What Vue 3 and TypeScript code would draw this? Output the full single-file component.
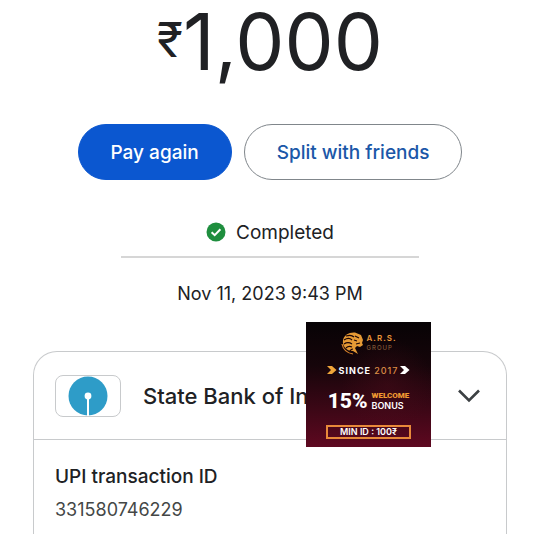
<script setup lang="ts">
import { ref } from 'vue'

interface Payment {
  currency: string
  amount: string
  status: string
  date: string
  bank: string
  transactionId: string
}

const payment: Payment = {
  currency: '₹',
  amount: '1,000',
  status: 'Completed',
  date: 'Nov 11, 2023 9:43 PM',
  bank: 'State Bank of India',
  transactionId: '331580746229',
}

const expanded = ref<boolean>(true)
</script>

<template>
  <main class="page">
    <h1 class="amount">
      <span class="currency">{{ payment.currency }}</span><span>{{ payment.amount }}</span>
    </h1>

    <div class="actions">
      <button type="button" class="btn primary">Pay again</button>
      <button type="button" class="btn outline">Split with friends</button>
    </div>

    <div class="status">
      <svg class="tick" viewBox="0 0 20 20" aria-hidden="true">
        <circle cx="10" cy="10" r="9.5" fill="#1e8e3e" />
        <path d="M5.6 10.2 8.7 13.2 14.4 7.2" fill="none" stroke="#fff" stroke-width="2" />
      </svg>
      <span>{{ payment.status }}</span>
    </div>
    <time class="date">{{ payment.date }}</time>

    <section class="card">
      <header class="head">
        <span class="logo">
          <svg viewBox="0 0 40 40" aria-hidden="true">
            <circle cx="20" cy="20" r="19.5" fill="#2e9cc8" />
            <circle cx="20" cy="20" r="3.4" fill="#fff" />
            <path d="M20 20V40" stroke="#fff" stroke-width="2" />
          </svg>
        </span>
        <h2 class="bank">{{ payment.bank }}</h2>
        <button
          type="button"
          class="toggle"
          aria-label="Toggle details"
          :aria-expanded="expanded"
          @click="expanded = !expanded"
        >
          <svg viewBox="0 0 24 16" aria-hidden="true">
            <path d="M2 2.5 12 12.5 22 2.5" fill="none" stroke="#3c4043" stroke-width="2.6" />
          </svg>
        </button>
      </header>

      <dl v-if="expanded" class="details">
        <dt>UPI transaction ID</dt>
        <dd>{{ payment.transactionId }}</dd>
      </dl>

      <aside class="promo">
        <div class="brand">
          <svg class="lion" viewBox="0 0 24 24" aria-hidden="true">
            <path
              d="M2 9C3 4 8 1 14 1.5L20 4l2 5-1 3 1 2-3 2-3-1-2 2 3 6-5-3C5 20 1 15 2 9Z"
              fill="#e59a35"
            />
            <path
              d="M5 5c3-1 6-1 8 1M3 9c3-2 6-2 8 0M3 13c3-2 5-2 8 0M5 17c2-2 4-2 6-1M9 20c1-2 2-2 3-2M14 5l4 2M13 9l3 1M15 13l4-1"
              fill="none"
              stroke="#1a0507"
              stroke-width="1.2"
            />
            <path d="M1 13c1 5 5 9 11 10" fill="none" stroke="#d9822b" stroke-width="1.2" />
          </svg>
          <span class="brand-text">
            <b>A.R.S.</b>
            <span>GROUP</span>
          </span>
        </div>
        <div class="since">
          <svg viewBox="0 0 10 10" aria-hidden="true">
            <path d="M0 1H5L9.5 5 5 9H0L4 5Z" fill="#f0a53a" />
          </svg>
          <span>SINCE <em>2017</em></span>
          <svg viewBox="0 0 10 10" aria-hidden="true">
            <path d="M0 1H5L9.5 5 5 9H0L4 5Z" fill="#fff" />
          </svg>
        </div>
        <div class="offer">
          <strong>15%</strong>
          <span class="offer-text">
            <b>WELCOME</b>
            <span>BONUS</span>
          </span>
        </div>
        <div class="minimum">MIN ID : 100₹</div>
      </aside>
    </section>
  </main>
</template>

<style>
body {
  margin: 0;
  background: #fff;
}
</style>

<style scoped>
.page {
  box-sizing: border-box;
  min-height: 100vh;
  padding: 0 33px;
  display: flex;
  flex-direction: column;
  align-items: center;
  color: #202124;
  font-family: Inter, Roboto, sans-serif;
}

.amount {
  margin: 0;
  height: 84px;
  display: flex;
  align-items: flex-start;
  font-size: 78px;
  line-height: 84px;
  font-weight: 400;
}

.currency {
  font-size: 48px;
  line-height: 80px;
}

.actions {
  margin-top: 40px;
  display: flex;
  gap: 12px;
}

.btn {
  height: 56px;
  padding: 0 32px;
  border: 1px solid #0b57d0;
  border-radius: 28px;
  font-family: inherit;
  font-size: 19px;
  font-weight: 500;
  white-space: nowrap;
}

.primary {
  background: #0b57d0;
  color: #fff;
}

.outline {
  background: #fff;
  border-color: #80868b;
  color: #1b57a8;
}

.status {
  box-sizing: border-box;
  width: 298px;
  height: 54px;
  margin-top: 24px;
  padding-top: 4px;
  border-bottom: 2px solid #d6d6d6;
  display: flex;
  justify-content: center;
  align-items: center;
  gap: 10px;
  font-size: 19px;
}

.tick {
  width: 20px;
  height: 20px;
}

.date {
  margin-top: 24px;
  font-size: 18px;
  line-height: 24px;
}

.card {
  box-sizing: border-box;
  position: relative;
  flex: 1;
  width: 100%;
  margin-top: 45px;
  border: 1px solid #c8cacc;
  border-bottom: 0;
  border-radius: 24px 24px 0 0;
}

.head {
  height: 87px;
  padding: 0 21px;
  display: flex;
  align-items: center;
  border-bottom: 1px solid #c8cacc;
}

.logo {
  box-sizing: border-box;
  width: 66px;
  height: 42px;
  border: 1px solid #c8cacc;
  border-radius: 8px;
  display: flex;
  justify-content: center;
}

.logo svg {
  width: 40px;
  height: 40px;
}

.bank {
  flex: 1;
  margin: 0 0 0 22px;
  font-size: 22px;
  line-height: 28px;
  font-weight: 500;
}

.toggle {
  width: 32px;
  height: 32px;
  padding: 0;
  border: 0;
  background: none;
  display: flex;
  justify-content: center;
  align-items: center;
}

.toggle svg {
  width: 24px;
  height: 16px;
}

.details {
  margin: 0;
  padding: 20px 21px;
}

.details dt {
  font-size: 19px;
  line-height: 34px;
  font-weight: 500;
}

.details dd {
  margin: 0;
  font-size: 18px;
  line-height: 32px;
  color: #444746;
}

.promo {
  box-sizing: border-box;
  position: absolute;
  top: -30px;
  left: 272px;
  width: 125px;
  height: 125px;
  padding-top: 8px;
  display: flex;
  flex-direction: column;
  align-items: center;
  background:
    radial-gradient(circle at 65% 50%, rgba(90, 15, 30, 0.3), transparent 45%),
    linear-gradient(180deg, #070305 0%, #16050a 35%, #3c0716 70%, #5e0820 100%);
  color: #fff;
  white-space: nowrap;
}

.brand {
  height: 25px;
  display: flex;
  align-items: center;
  gap: 2px;
}

.lion {
  width: 24px;
  height: 24px;
}

.brand-text {
  display: flex;
  flex-direction: column;
  color: #e8963a;
  font-size: 6px;
  line-height: 9px;
  letter-spacing: 1px;
}

.brand-text b {
  font-size: 8px;
  font-weight: 600;
}

.brand-text span {
  color: #96683f;
}

.since {
  height: 14px;
  margin-top: 8px;
  display: flex;
  align-items: center;
  gap: 2px;
  font-size: 9px;
  font-weight: 700;
}

.since em {
  color: #dc8d46;
  font-style: normal;
  font-weight: 500;
}

.since svg {
  width: 10px;
  height: 10px;
}

.since span {
  letter-spacing: 1px;
}

.offer {
  height: 24px;
  margin-top: 12px;
  display: flex;
  align-items: center;
  gap: 4px;
}

.offer strong {
  font-family: Roboto, sans-serif;
  font-size: 21px;
  font-weight: 800;
}

.offer-text {
  display: flex;
  flex-direction: column;
  font-size: 9px;
  line-height: 10px;
  font-weight: 600;
}

.offer-text b {
  color: #f09a32;
  font-family: Roboto, sans-serif;
  font-size: 8px;
  font-weight: 900;
}

.minimum {
  box-sizing: border-box;
  width: 85px;
  height: 14px;
  margin-top: 12px;
  border: 2px solid #e8893a;
  font-size: 9px;
  line-height: 10px;
  font-weight: 600;
  text-align: center;
}
</style>
